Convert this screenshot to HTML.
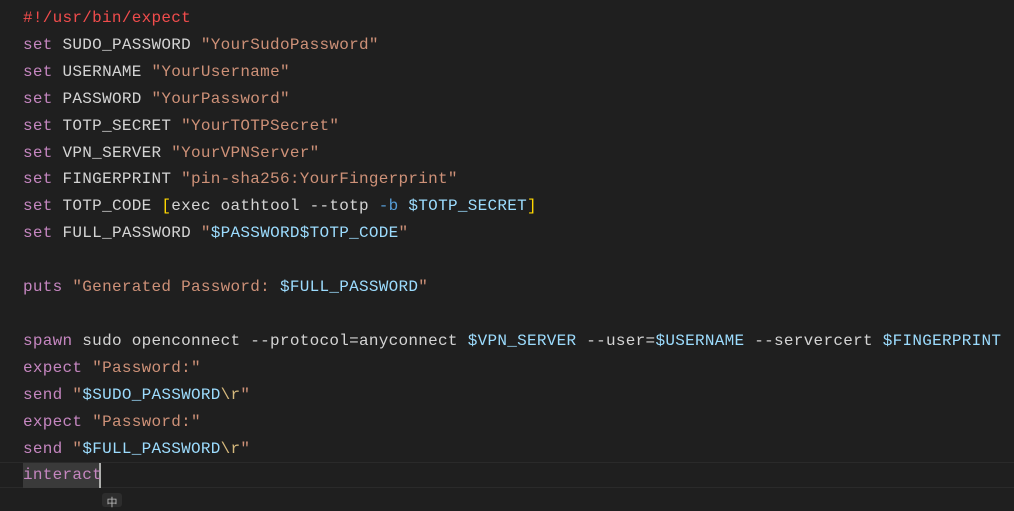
<!DOCTYPE html>
<html><head><meta charset="utf-8"><style>
html,body{margin:0;padding:0;background:#1f1f1f;width:1014px;height:504px;overflow:hidden}
.code{position:absolute;left:23px;top:5px;font-family:"Liberation Mono",monospace;font-size:16px;letter-spacing:0.28px;line-height:26.9px;color:#d4d4d4;white-space:pre}
.k{color:#c586c0}.s{color:#ce9178}.v{color:#9cdcfe}.c{color:#f14c4c}.b{color:#ffd700}.e{color:#d7ba7d}.o{color:#569cd6}
.cur{position:absolute;left:0;top:462px;width:1014px;height:26px;border-top:1px solid #2a2a2a;border-bottom:1px solid #2a2a2a;box-sizing:border-box}
.sel{position:absolute;left:23px;top:463px;width:77px;height:25px;background:#3a3a3a}
.caret{position:absolute;left:99px;top:463px;width:2px;height:25px;background:#aeafad}
.ime{position:absolute;left:102px;top:493px;width:20px;height:14px;background:#2d2d2d;border-radius:3px;color:#bbb;font:11px "Noto Sans CJK SC",sans-serif;text-align:center;line-height:18px}
</style></head><body>
<div class="cur"></div><div class="sel"></div><div class="caret"></div>
<div class="code"><span class="c">#!/usr/bin/expect</span>
<span class="k">set</span> SUDO_PASSWORD <span class="s">"YourSudoPassword"</span>
<span class="k">set</span> USERNAME <span class="s">"YourUsername"</span>
<span class="k">set</span> PASSWORD <span class="s">"YourPassword"</span>
<span class="k">set</span> TOTP_SECRET <span class="s">"YourTOTPSecret"</span>
<span class="k">set</span> VPN_SERVER <span class="s">"YourVPNServer"</span>
<span class="k">set</span> FINGERPRINT <span class="s">"pin-sha256:YourFingerprint"</span>
<span class="k">set</span> TOTP_CODE <span class="b">[</span>exec oathtool --totp <span class="o">-b</span> <span class="v">$TOTP_SECRET</span><span class="b">]</span>
<span class="k">set</span> FULL_PASSWORD <span class="s">"</span><span class="v">$PASSWORD$TOTP_CODE</span><span class="s">"</span>

<span class="k">puts</span> <span class="s">"Generated Password: </span><span class="v">$FULL_PASSWORD</span><span class="s">"</span>

<span class="k">spawn</span> sudo openconnect --protocol=anyconnect <span class="v">$VPN_SERVER</span> --user=<span class="v">$USERNAME</span> --servercert <span class="v">$FINGERPRINT</span>
<span class="k">expect</span> <span class="s">"Password:"</span>
<span class="k">send</span> <span class="s">"</span><span class="v">$SUDO_PASSWORD</span><span class="e">\r</span><span class="s">"</span>
<span class="k">expect</span> <span class="s">"Password:"</span>
<span class="k">send</span> <span class="s">"</span><span class="v">$FULL_PASSWORD</span><span class="e">\r</span><span class="s">"</span>
<span class="k">interact</span></div>
<div class="ime">中</div>
</body></html>
